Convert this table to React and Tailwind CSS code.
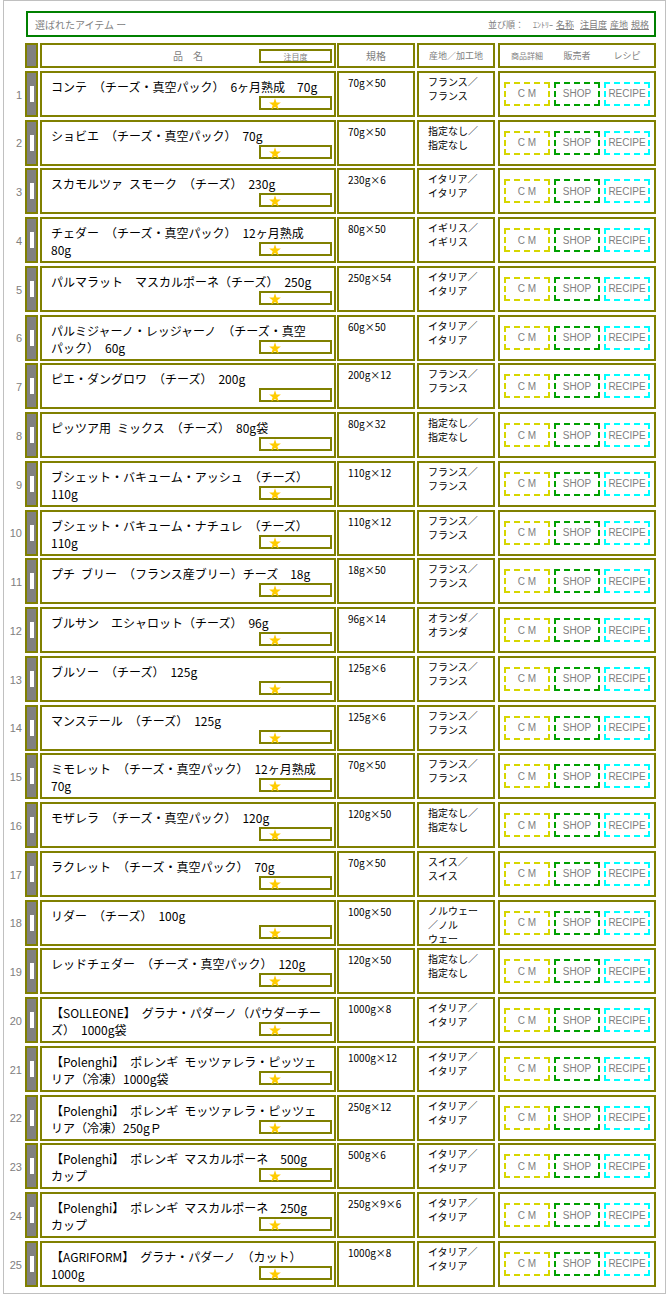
const F = ["フランス／", "フランス"];
const I = ["イタリア／", "イタリア"];
const N = ["指定なし／", "指定なし"];

// "_" marks a half-width gap
const items = [
  { name: ["コンテ_（チーズ・真空パック）　6ヶ月熟成　70g"], spec: "70g×50", origin: F },
  { name: ["ショビエ_（チーズ・真空パック）　70g"], spec: "70g×50", origin: N },
  { name: ["スカモルツァ_スモーク　（チーズ）　230g"], spec: "230g×6", origin: I },
  { name: ["チェダー_（チーズ・真空パック）_12ヶ月熟成", "80g"], spec: "80g×50", origin: ["イギリス／", "イギリス"] },
  { name: ["パルマラット　マスカルポーネ（チーズ）　250g"], spec: "250g×54", origin: I },
  { name: ["パルミジャーノ・レッジャーノ_（チーズ・真空", "パック）　60g"], spec: "60g×50", origin: I },
  { name: ["ピエ・ダングロワ　（チーズ）　200g"], spec: "200g×12", origin: F },
  { name: ["ピッツア用_ミックス　（チーズ）　80g袋"], spec: "80g×32", origin: N },
  { name: ["ブシェット・バキューム・アッシュ　（チーズ）", "110g"], spec: "110g×12", origin: F },
  { name: ["ブシェット・バキューム・ナチュレ　（チーズ）", "110g"], spec: "110g×12", origin: F },
  { name: ["プチ_ブリー　（フランス産ブリー）チーズ　18g"], spec: "18g×50", origin: F },
  { name: ["ブルサン　エシャロット（チーズ）　96g"], spec: "96g×14", origin: ["オランダ／", "オランダ"] },
  { name: ["ブルソー　（チーズ）　125g"], spec: "125g×6", origin: F },
  { name: ["マンステール　（チーズ）　125g"], spec: "125g×6", origin: F },
  { name: ["ミモレット　（チーズ・真空パック）　12ヶ月熟成", "70g"], spec: "70g×50", origin: F },
  { name: ["モザレラ　（チーズ・真空パック）　120g"], spec: "120g×50", origin: N },
  { name: ["ラクレット　（チーズ・真空パック）　70g"], spec: "70g×50", origin: ["スイス／", "スイス"] },
  { name: ["リダー　（チーズ）　100g"], spec: "100g×50", origin: ["ノルウェー", "／ノル", "ウェー"] },
  { name: ["レッドチェダー　（チーズ・真空パック）　120g"], spec: "120g×50", origin: N },
  { name: ["【SOLLEONE】　グラナ・パダーノ（パウダーチー", "ズ）　1000g袋"], spec: "1000g×8", origin: I },
  { name: ["【Polenghi】　ポレンギ_モッツァレラ・ピッツェ", "リア（冷凍）1000g袋"], spec: "1000g×12", origin: I },
  { name: ["【Polenghi】　ポレンギ_モッツァレラ・ピッツェ", "リア（冷凍）250gＰ"], spec: "250g×12", origin: I },
  { name: ["【Polenghi】　ポレンギ_マスカルポーネ　500g", "カップ"], spec: "500g×6", origin: I },
  { name: ["【Polenghi】　ポレンギ_マスカルポーネ　250g", "カップ"], spec: "250g×9×6", origin: I },
  { name: ["【AGRIFORM】　グラナ・パダーノ　（カット）", "1000g"], spec: "1000g×8", origin: I },
];

function Star() {
  return (
    <svg className="absolute left-[8px] top-0" width="12" height="12" viewBox="0 0 12 12">
      <polygon
        fill="#ffcc00"
        points="6,0.3 7.47,4.48 11.9,4.58 8.38,7.27 9.64,11.52 6,9 2.36,11.52 3.62,7.27 0.1,4.58 4.53,4.48"
      />
    </svg>
  );
}

function Btn({ label, color }) {
  return (
    <div
      className={`w-[46px] h-[24px] border-2 border-dashed ${color} flex items-center justify-center text-[10px] text-[#808080] font-['Liberation_Sans',Arial,sans-serif]`}
    >
      {label}
    </div>
  );
}

function Row({ n, item }) {
  return (
    <div className="flex h-[46px]">
      <div className="w-[21px] flex items-center justify-end pr-[3px] pt-[2px] text-[11px] text-[#808080] font-['Liberation_Sans',Arial,sans-serif]">
        {n}
      </div>
      <div className="w-[13px] bg-[#808080] border-2 border-[#808000] flex items-center justify-center">
        <div className="w-[4px] h-[16px] bg-white" />
      </div>
      <div className="relative ml-[2px] w-[296px] border-2 border-[#808000] pl-[9px] pt-[5px] text-[12px] leading-[17px] text-black">
        {item.name.map((l, i) => (
          <div key={i} className="whitespace-nowrap">
            {l.replaceAll("_", "\u2002")}
          </div>
        ))}
        <div className="absolute right-[2px] bottom-[5px] w-[73px] h-[14px] border-2 border-[#808000]">
          <Star />
        </div>
      </div>
      <div className="ml-[1px] w-[78px] border-2 border-[#808000] pl-[9px] pt-[4px] text-[10px] leading-[12px] text-black whitespace-nowrap">
        {item.spec}
      </div>
      <div className="ml-[2px] w-[78px] border-2 border-[#808000] pl-[9px] pt-[2px] text-[10px] leading-[14px] text-black">
        {item.origin.map((l, i) => (
          <div key={i} className="whitespace-nowrap">{l}</div>
        ))}
      </div>
      <div className="ml-[3px] w-[158px] border-2 border-[#808000] flex items-center gap-[4px] pl-[4px]">
        <Btn label="C M" color="border-[#d6d600]" />
        <Btn label="SHOP" color="border-[#00a000]" />
        <Btn label="RECIPE" color="border-[#00ffff]" />
      </div>
    </div>
  );
}

export default function App() {
  return (
    <div className="bg-white min-h-[1298px] font-['Noto_Sans_CJK_JP','Noto_Sans',sans-serif]">
      <div className="ml-[3px] w-[663px] border border-[#c0c0c0] pt-[10px] pb-[6px]">
        {/* title bar */}
        <div className="ml-[22px] w-[630px] h-[26px] border-2 border-[#008000] flex items-center justify-between pl-[7px] pr-[5px] text-[#808080]">
          <span className="text-[10px]">選ばれたアイテム ー</span>
          <div className="flex items-center gap-[3px] text-[9px] pt-[2px]">
            <span className="mr-[6px]">並び順：</span>
            <span className="text-[8px]">ｴﾝﾄﾘｰ</span>
            <span className="underline">名称</span>
            <span className="underline ml-[3px]">注目度</span>
            <span className="underline">産地</span>
            <span className="underline">規格</span>
          </div>
        </div>

        <div className="mt-[6px] flex flex-col gap-[2.75px]">
          {/* column header */}
          <div className="flex h-[25px] text-[#808080]">
            <div className="w-[21px]" />
            <div className="w-[13px] bg-[#808080] border-2 border-[#808000]" />
            <div className="relative ml-[2px] w-[296px] border-2 border-[#808000] flex items-center justify-center text-[10px]">
              品　名
              <div className="absolute right-[2px] top-[4px] w-[73px] h-[14px] border-2 border-[#808000] flex items-end justify-center text-[8px] leading-[9px]">
                注目度
              </div>
            </div>
            <div className="ml-[1px] w-[78px] border-2 border-[#808000] flex items-center justify-center text-[10px]">
              規格
            </div>
            <div className="ml-[2px] w-[78px] border-2 border-[#808000] flex items-center justify-center text-[9px]">
              産地／加工地
            </div>
            <div className="ml-[3px] w-[158px] border-2 border-[#808000] flex items-center gap-[4px] pl-[4px]">
              <span className="w-[46px] text-center text-[8px]">商品詳細</span>
              <span className="w-[46px] text-center text-[9px]">販売者</span>
              <span className="w-[46px] text-center text-[9px]">レシピ</span>
            </div>
          </div>

          {items.map((item, i) => (
            <Row key={i} n={i + 1} item={item} />
          ))}
        </div>
      </div>
    </div>
  );
}
